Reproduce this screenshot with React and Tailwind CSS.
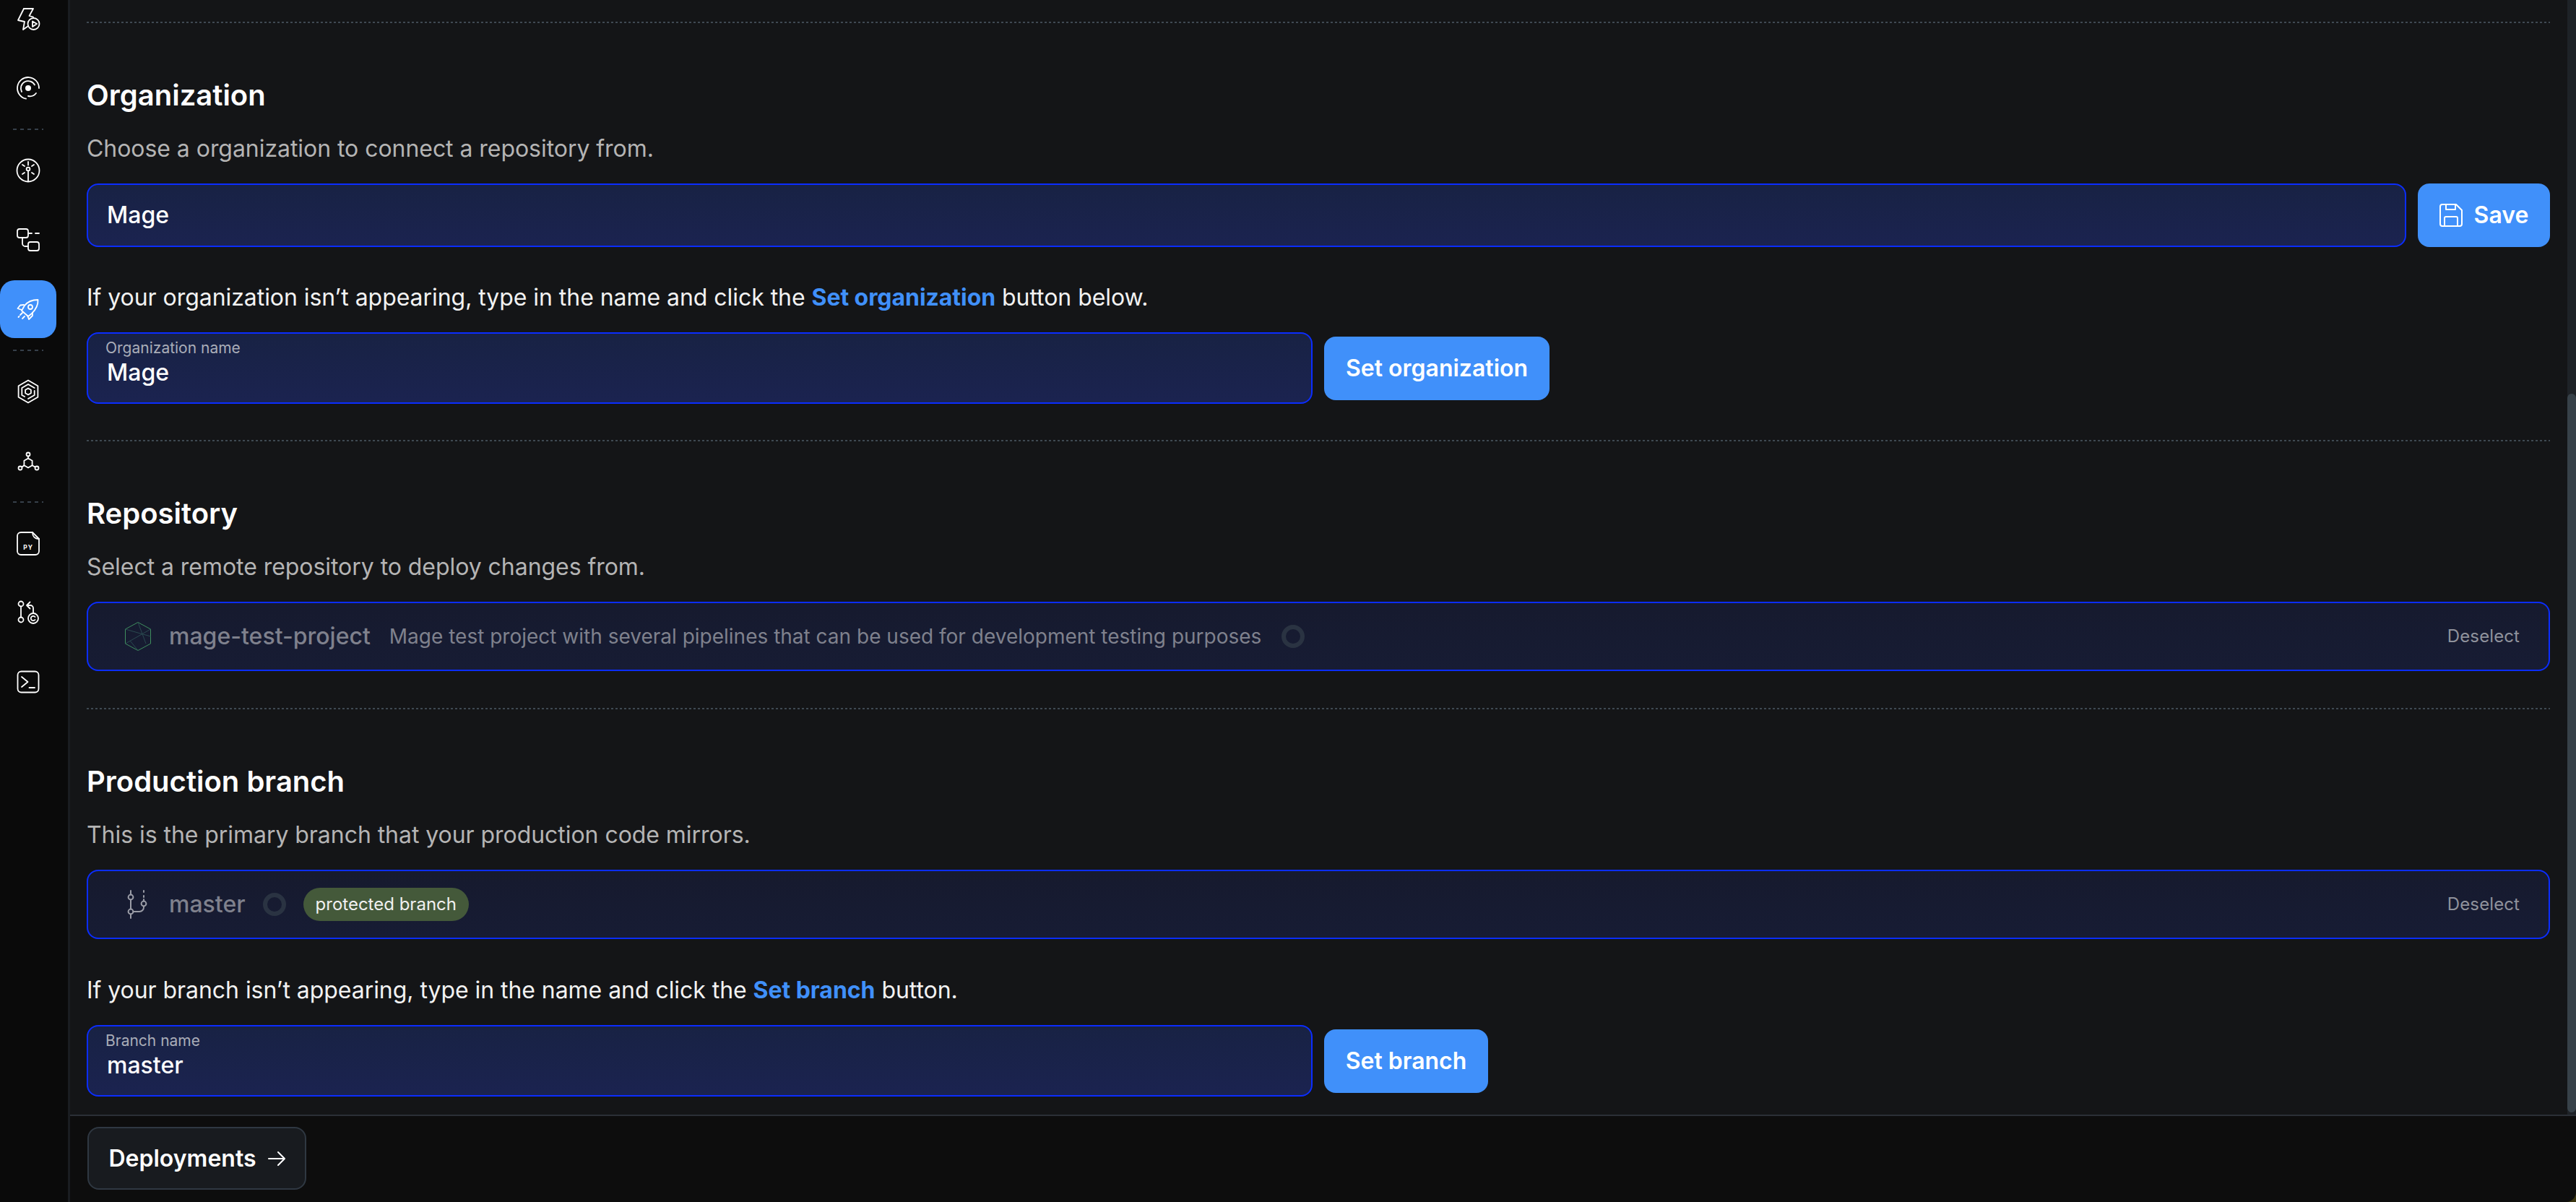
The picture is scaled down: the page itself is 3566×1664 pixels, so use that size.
const DOTS = 'h-[2px] bg-[repeating-linear-gradient(90deg,#3f4952_0_3px,transparent_3px_6px)]';

function Icon({ children, fill = 'none' }) {
  return (
    <svg width="40" height="40" viewBox="0 0 40 40" fill={fill} stroke="currentColor" strokeWidth="1.8" strokeLinecap="round" strokeLinejoin="round">
      {children}
    </svg>
  );
}

const BoltIcon = () => (
  <Icon>
    <path d="M14 6 H27 L21.5 16 L27 17.5" />
    <path d="M14 6 L6 22 L15 24 L13 35 L20 30" />
    <circle cx="27.5" cy="27" r="8" />
    <path d="M26 23.5 L32 27 L26 31 Z" />
  </Icon>
);
const TargetIcon = () => (
  <Icon>
    <path d="M35 20 A15 15 0 1 0 17 34.7" />
    <path d="M11 25 A10 10 0 0 1 29 15.5" />
    <path d="M20 31 A11 11 0 0 0 31 27" />
    <circle cx="20" cy="20" r="4" fill="currentColor" stroke="none" />
  </Icon>
);
const WheelIcon = () => (
  <Icon>
    <circle cx="20" cy="20" r="15.5" />
    <circle cx="20" cy="18" r="2.4" />
    <path d="M20 20.5 V35 M20 8 V12.5 M12 12 L15 14 M28 12 L25 14 M12 25 L15 23 M28 25 L25 23" />
  </Icon>
);
const FlowIcon = () => (
  <Icon>
    <rect x="5" y="5" width="15" height="12" rx="3" />
    <rect x="20" y="23" width="15" height="12" rx="3" />
    <path d="M20 11 H25 M30 11 H35 M12 17 V25 A4 4 0 0 0 16 29 H20" />
  </Icon>
);
const RocketIcon = () => (
  <Icon>
    <path d="M33.5 7 C34 14 30 21 25 26 L20 30 L11 22 L15 15 C19 10 26 7 33.5 7 Z" />
    <circle cx="23" cy="17" r="3" />
    <path d="M14 14 L9 14.5 L5.5 19 L11 21 M26 25 L26 29 L21 34 L19 29 M9 28 L12 25 M6.5 31 L7.5 30 M12 33 L15 30" />
  </Icon>
);
const HexIcon = () => (
  <Icon>
    <path d="M20 4.5 L33.4 12.2 V27.8 L20 35.5 L6.6 27.8 V12.2 Z" />
    <path d="M15 27 L11.3 25 V15 L20 10 L28.7 15 M28.7 19 V25 L20 30" />
    <path d="M20 15.5 L23.9 17.75 V22.25 L20 24.5 L16.1 22.25 V17.75 Z" />
  </Icon>
);
const GraphIcon = () => (
  <Icon>
    <path d="M20 16.5 L25.6 19.8 V26.2 L20 29.5 L14.4 26.2 V19.8 Z" />
    <path d="M20 13.5 V16.5 M14.4 26.2 L11.5 28.5 M25.6 26.2 L29.5 28.5" />
    <circle cx="20" cy="11" r="2.5" />
    <circle cx="9" cy="30" r="2.5" />
    <circle cx="32" cy="30" r="2.5" />
  </Icon>
);
const PyIcon = () => (
  <Icon>
    <path d="M10 5 H26 L35 14 V31 A5 5 0 0 1 30 36 H10 A5 5 0 0 1 5 31 V10 A5 5 0 0 1 10 5 Z" />
    <path d="M26 5 C26 10 29 14 35 14" />
    <text x="20" y="29" textAnchor="middle" fontSize="8.5" fontWeight="700" letterSpacing="1" fill="currentColor" stroke="none" fontFamily="Inter, sans-serif">PY</text>
  </Icon>
);
const GitIcon = () => (
  <Icon>
    <circle cx="10" cy="8" r="3.5" />
    <circle cx="10" cy="30" r="3.5" />
    <circle cx="27" cy="28" r="7" />
    <path d="M10 11.5 V26.5 M27 21 V14 A4 4 0 0 0 23 10 H18 M22.5 5.5 L18 10 L22.5 14.5" />
    <path d="M29.5 26 A3.2 3.2 0 1 0 29.5 30" />
  </Icon>
);
const TerminalIcon = () => (
  <Icon>
    <rect x="5.5" y="5.5" width="29" height="29" rx="5" />
    <path d="M11 13 L19.5 20 L11 27 M21.5 28 H29" />
  </Icon>
);

const SaveIcon = () => (
  <svg width="32" height="32" viewBox="0 0 32 32" fill="none" stroke="currentColor" strokeWidth="2" strokeLinejoin="round">
    <path d="M4 1 H23 L31 9 V28 A3 3 0 0 1 28 31 H4 A3 3 0 0 1 1 28 V4 A3 3 0 0 1 4 1 Z" />
    <path d="M9 1 V8 H22 V1 M7 31 V20 A2 2 0 0 1 9 18 H23 A2 2 0 0 1 25 20 V31" />
  </svg>
);

const RepoIcon = () => (
  <svg width="38" height="42" viewBox="0 0 38 42" fill="none" strokeWidth="1">
    <path d="M19 1.5 L36.5 11 V31 L19 40.5 L1.5 31 V11 Z" stroke="#3f8f5e" />
    <path d="M19 1.5 L30 31 M36.5 11 L1.5 31 M1.5 11 L36.5 21 M8 27 L19 40.5" stroke="#2a4a50" />
  </svg>
);

const BranchIcon = () => (
  <svg width="30" height="40" viewBox="0 0 30 40" fill="none" stroke="#9a9ca6" strokeWidth="2" strokeLinecap="round">
    <circle cx="5" cy="10" r="3.4" />
    <circle cx="5" cy="30" r="3.4" />
    <circle cx="23" cy="19" r="3.4" />
    <path d="M5 1 V6.5 M5 13.5 V26.5 M5 33.5 V39 M8.5 30 H17 A6 6 0 0 0 23 24 V22.5 M23 1 V3 M23 8 V10 M23 13 V15.5" />
  </svg>
);

const ArrowIcon = () => (
  <svg width="24" height="24" viewBox="0 0 24 24" fill="none" stroke="currentColor" strokeWidth="2" strokeLinecap="round" strokeLinejoin="round">
    <path d="M1 12 H23 M14 3 L23 12 L14 21" />
  </svg>
);

function NavItem({ icon: I, active }) {
  return (
    <div className={`w-[78px] h-[80px] mb-[16px] shrink-0 flex items-center justify-center rounded-[20px] text-white ${active ? 'bg-[#4090fa]' : ''}`}>
      <I />
    </div>
  );
}

function NavDivider() {
  return <div className="w-[42px] h-[2px] ml-[18px] mb-[16px] shrink-0 bg-[repeating-linear-gradient(90deg,#36404a_0_5px,transparent_5px_10px)]" />;
}

function Sidebar() {
  return (
    <div className="w-[97px] shrink-0 h-full bg-[#0a0a0a] border-r-[3px] border-[#1a1d21] overflow-hidden flex flex-col">
      <div className="-mt-[14px] flex flex-col">
        <NavItem icon={BoltIcon} />
        <NavItem icon={TargetIcon} />
        <NavDivider />
        <NavItem icon={WheelIcon} />
        <NavItem icon={FlowIcon} />
        <NavItem icon={RocketIcon} active />
        <NavDivider />
        <NavItem icon={HexIcon} />
        <NavItem icon={GraphIcon} />
        <NavDivider />
        <NavItem icon={PyIcon} />
        <NavItem icon={GitIcon} />
        <NavItem icon={TerminalIcon} />
      </div>
    </div>
  );
}

function Heading({ title, desc }) {
  return (
    <>
      <h2 className="mt-[78px] h-[44px] leading-[44px] text-[40px] font-semibold text-white">{title}</h2>
      <p className="mt-[32px] h-[40px] leading-[40px] text-[32px] tracking-[-0.05px] text-[#b4b4b4]">{desc}</p>
    </>
  );
}

function Button({ children, className = '' }) {
  return (
    <button className={`h-[88px] shrink-0 rounded-[16px] bg-[#4090fa] text-white text-[32px] font-semibold flex items-center justify-center ${className}`}>
      {children}
    </button>
  );
}

function NameInput({ label, value, button, buttonWidth }) {
  return (
    <div className="mt-[28px] flex items-center gap-[16px]">
      <div className="w-[1697px] h-[99px] rounded-[16px] border-2 border-[#0b2dff] bg-gradient-to-b from-[#182244] to-[#1b2350] px-[24px] pt-[6px]">
        <div className="text-[21px] leading-[28px] text-[#a9adb8]">{label}</div>
        <div className="ml-[2px] text-[32px] leading-[40px] font-medium text-white">{value}</div>
      </div>
      <Button className={buttonWidth}>{button}</Button>
    </div>
  );
}

function SelectedRow({ children }) {
  return (
    <div className="mt-[28px] h-[96px] rounded-[16px] border-2 border-[#0b2dff] bg-gradient-to-b from-[#161a2e] to-[#171c34] flex items-center justify-between pr-[40px]">
      <div className="flex items-center">{children}</div>
      <span className="text-[24px] tracking-[0.1px] text-[#8f929c]">Deselect</span>
    </div>
  );
}

const Ring = () => <span className="w-[32px] h-[32px] rounded-full border-[6px] border-[#2a3342]" />;

export default function App() {
  return (
    <div className="w-[3566px] h-[1664px] flex overflow-hidden bg-[#3a3510] [font-family:Inter,sans-serif]">
      <Sidebar />
      <div className="flex-1 min-w-0 flex flex-col">
        <div className="flex-1 min-h-0 flex bg-[#141517]">
          <div className="flex-1 min-w-0 pl-[23px] pr-[24px] pt-[30px] overflow-hidden">
            <div className={DOTS} />
            <Heading title="Organization" desc="Choose a organization to connect a repository from." />
            <div className="mt-[28px] flex gap-[16px]">
              <div className="flex-1 h-[88px] rounded-[16px] border-2 border-[#0b2dff] bg-gradient-to-b from-[#182244] to-[#1b2350] px-[26px] flex items-center text-[32px] font-medium text-white">
                Mage
              </div>
              <Button className="w-[183px] gap-[16px]"><SaveIcon />Save</Button>
            </div>
            <p className="mt-[50px] h-[40px] leading-[40px] text-[32px] tracking-[-0.05px] text-[#f2f2f2]">
              If your organization isn’t appearing, type in the name and click the <span className="font-bold text-[#4090fa]">Set organization</span> button below.
            </p>
            <NameInput label="Organization name" value="Mage" button="Set organization" buttonWidth="w-[312px]" />
            <div className={`mt-[50px] ${DOTS}`} />

            <Heading title="Repository" desc="Select a remote repository to deploy changes from." />
            <SelectedRow>
              <span className="ml-[50px] mr-[24px] flex"><RepoIcon /></span>
              <span className="text-[32px] font-medium text-[#7f818d]">mage-test-project</span>
              <span className="ml-[26px] text-[28px] text-[#7f818d]">Mage test project with several pipelines that can be used for development testing purposes</span>
              <span className="ml-[28px] flex"><Ring /></span>
            </SelectedRow>
            <div className={`mt-[51px] ${DOTS}`} />

            <Heading title="Production branch" desc="This is the primary branch that your production code mirrors." />
            <SelectedRow>
              <span className="ml-[54px] mr-[28px] flex"><BranchIcon /></span>
              <span className="text-[32px] font-medium text-[#7f818d]">master</span>
              <span className="ml-[24px] flex"><Ring /></span>
              <span className="ml-[24px] h-[46px] px-[17px] rounded-full bg-[#44593a] text-[24px] text-[#f0f0f0] flex items-center">protected branch</span>
            </SelectedRow>
            <p className="mt-[51px] h-[40px] leading-[40px] text-[32px] tracking-[-0.05px] text-[#f2f2f2]">
              If your branch isn’t appearing, type in the name and click the <span className="font-bold text-[#4090fa]">Set branch</span> button.
            </p>
            <NameInput label="Branch name" value="master" button="Set branch" buttonWidth="w-[227px]" />
          </div>
          <div className="w-[12px] shrink-0 bg-[#1e2227] pt-[545px]">
            <div className="h-[995px] rounded-[6px] bg-[#374149]" />
          </div>
        </div>
        <div className="h-[121px] shrink-0 bg-[#0d0d0d] border-t-2 border-[#2b2f36] pl-[24px] pt-[15px] rounded-br-[14px]">
          <button className="w-[303px] h-[87px] rounded-[16px] border-2 border-[#2f3842] bg-[#181b1f] text-white text-[32px] font-semibold flex items-center justify-center gap-[16px]">
            Deployments <ArrowIcon />
          </button>
        </div>
      </div>
    </div>
  );
}
